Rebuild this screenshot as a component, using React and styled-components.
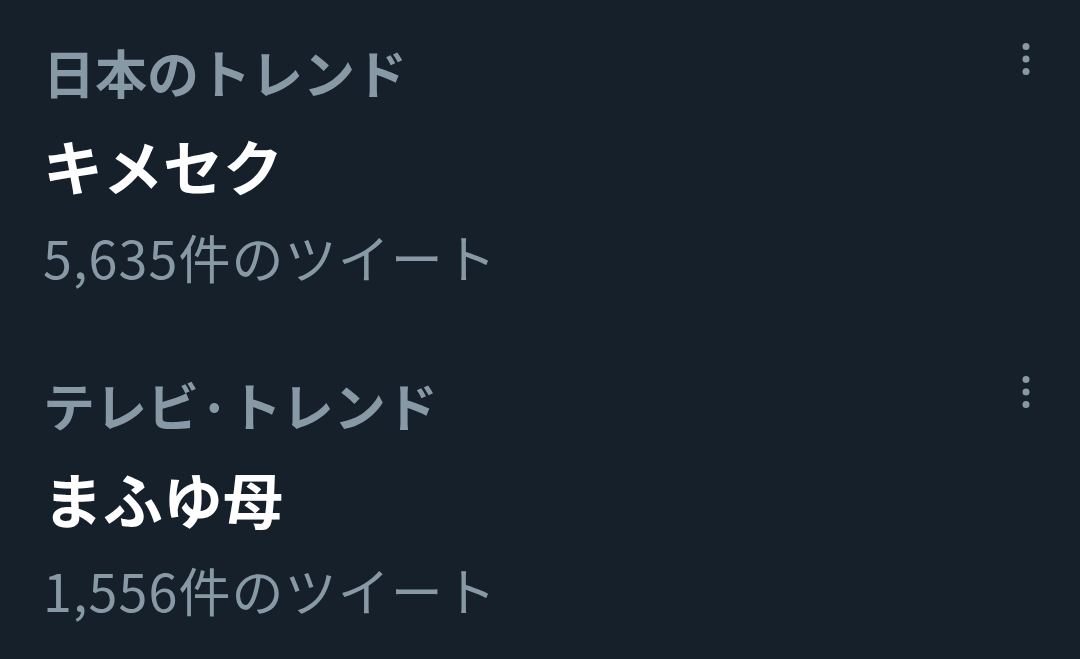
import React from "react";
import styled, { createGlobalStyle } from "styled-components";

const GlobalStyle = createGlobalStyle`
  html, body {
    margin: 0;
    padding: 0;
    background: #15202b;
  }
  body {
    font-family: "Noto Sans CJK JP", "Noto Sans", sans-serif;
    -webkit-font-smoothing: antialiased;
  }
`;

const List = styled.div`
  width: 1080px;
  height: 659px;
  overflow: hidden;
  background: #15202b;
`;

const Trend = styled.div`
  display: flex;
  align-items: flex-start;
  padding: 40px 50px 44px 43px;
`;

const TrendBody = styled.div`
  flex: 1;
  display: flex;
  flex-direction: column;
`;

const Category = styled.div`
  font-size: 52px;
  line-height: 64px;
  font-weight: 600;
  color: #8899a6;
  white-space: nowrap;
`;

const Title = styled.div`
  margin-top: 21px;
  font-size: 60px;
  line-height: 80px;
  font-weight: 700;
  color: #ffffff;
  white-space: nowrap;
`;

const Count = styled.div`
  margin-top: 20px;
  font-size: 52px;
  line-height: 64px;
  font-weight: 400;
  letter-spacing: 1.1px;
  color: #8899a6;
  white-space: nowrap;
`;

const MoreButton = styled.svg`
  flex: none;
  display: block;
  width: 8px;
  height: 32px;
  margin-top: 2.5px;
  fill: #8899a6;
`;

const MoreIcon = () => (
  <MoreButton viewBox="0 0 8 32">
    <circle cx="4" cy="3.5" r="3.5" />
    <circle cx="4" cy="16" r="3.5" />
    <circle cx="4" cy="28.5" r="3.5" />
  </MoreButton>
);

const trends = [
  { category: "日本のトレンド", title: "キメセク", count: "5,635件のツイート" },
  { category: "テレビ·トレンド", title: "まふゆ母", count: "1,556件のツイート" }
];

export default function App() {
  return (
    <>
      <GlobalStyle />
      <List>
        {trends.map(trend => (
          <Trend key={trend.title}>
            <TrendBody>
              <Category>{trend.category}</Category>
              <Title>{trend.title}</Title>
              <Count>{trend.count}</Count>
            </TrendBody>
            <MoreIcon />
          </Trend>
        ))}
      </List>
    </>
  );
}
